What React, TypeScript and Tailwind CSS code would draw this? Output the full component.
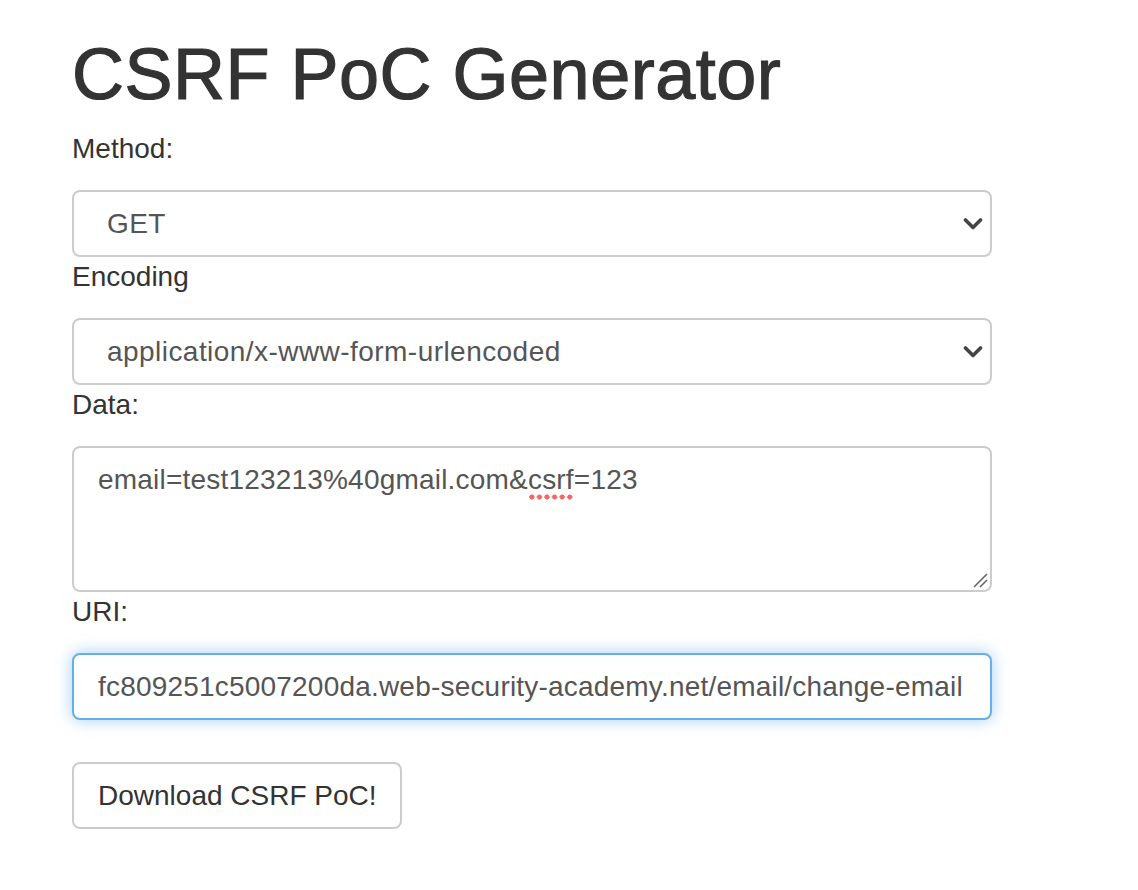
import React from 'react';

const font = { fontFamily: '"Liberation Sans", Arial, Helvetica, sans-serif' };

function Chevron() {
  return (
    <svg width="20" height="14" viewBox="0 0 20 14" className="pointer-events-none absolute right-[7px] top-1/2 -translate-y-1/2" aria-hidden="true">
      <polyline points="2.5,3 10,10.5 17.5,3" fill="none" stroke="#444" strokeWidth="3.6" strokeLinecap="round" strokeLinejoin="round" />
    </svg>
  );
}

function Label({ children }: { children: React.ReactNode }) {
  return <div className="mb-[21px] text-[28px] leading-[40px] text-[#333]">{children}</div>;
}

function Select({ value }: { value: string }) {
  return (
    <div className="relative flex h-[67px] w-[920px] items-center rounded-[8px] border-2 border-[#ccc] bg-white pl-[33px] text-[28px] tracking-[0.45px] text-[#555]">
      {value}
      <Chevron />
    </div>
  );
}

export default function App() {
  return (
    <div className="min-h-screen bg-white pt-[35px] pl-[72px]" style={font}>
      <h1 className="mb-[15px] text-[72px] font-medium leading-[79px] tracking-[0.5px] text-[#333] [-webkit-text-stroke:1.2px_#333]">CSRF PoC Generator</h1>

      <Label>Method:</Label>
      <Select value="GET" />

      <Label>Encoding</Label>
      <Select value="application/x-www-form-urlencoded" />

      <Label>Data:</Label>
      <div className="relative h-[146px] w-[920px] rounded-[8px] border-2 border-[#ccc] bg-white px-[24px] py-[12px] text-[28px] leading-[40px] tracking-[0.2px] text-[#555]">
        email=test123213%40gmail.com&amp;
        <span className="relative">
          csrf
          <span className="absolute left-0 right-0 bottom-[-5px] h-[6px] bg-[radial-gradient(circle,#f56565_2.3px,transparent_2.8px)] bg-[length:7.6px_6px] bg-repeat-x" />
        </span>
        =123
        <svg width="18" height="18" viewBox="0 0 18 18" className="absolute bottom-[1px] right-[1px]" aria-hidden="true">
          <line x1="3" y1="16" x2="16" y2="3" stroke="#666" strokeWidth="1.6" />
          <line x1="9" y1="16" x2="16" y2="9" stroke="#666" strokeWidth="1.6" />
        </svg>
      </div>

      <Label>URI:</Label>
      <div className="flex h-[67px] w-[920px] items-center rounded-[8px] border-2 border-[#66afe9] bg-white px-[24px] text-[28px] tracking-[0.2px] text-[#555] shadow-[0_0_16px_rgba(102,175,233,0.6)]">
        fc809251c5007200da.web-security-academy.net/email/change-email
      </div>

      <button
        type="button"
        className="mt-[42px] flex h-[67px] w-[330px] items-center whitespace-nowrap rounded-[8px] border-2 border-[#ccc] bg-white px-[24px] text-left text-[28px] text-[#333]"
      >
        Download CSRF PoC!
      </button>
    </div>
  );
}
